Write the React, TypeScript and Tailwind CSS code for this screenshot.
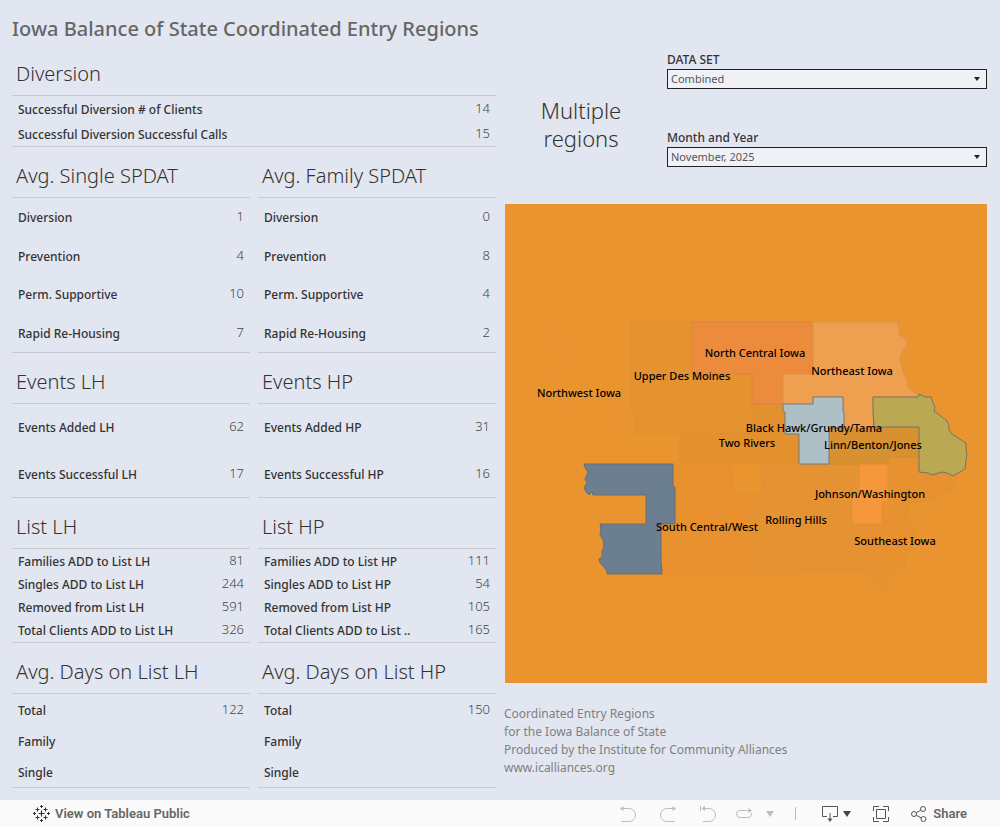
import clsx from "clsx";

type Row = { label: string; value?: number };

const diversion: Row[] = [
  { label: "Successful Diversion # of Clients", value: 14 },
  { label: "Successful Diversion Successful Calls", value: 15 },
];

const panels: { title: string; height: string; rows: Row[] }[] = [
  {
    title: "Avg. Single SPDAT",
    height: "h-[156px]",
    rows: [
      { label: "Diversion", value: 1 },
      { label: "Prevention", value: 4 },
      { label: "Perm. Supportive", value: 10 },
      { label: "Rapid Re-Housing", value: 7 },
    ],
  },
  {
    title: "Avg. Family SPDAT",
    height: "h-[156px]",
    rows: [
      { label: "Diversion", value: 0 },
      { label: "Prevention", value: 8 },
      { label: "Perm. Supportive", value: 4 },
      { label: "Rapid Re-Housing", value: 2 },
    ],
  },
  {
    title: "Events LH",
    height: "h-[95px]",
    rows: [
      { label: "Events Added LH", value: 62 },
      { label: "Events Successful LH", value: 17 },
    ],
  },
  {
    title: "Events HP",
    height: "h-[95px]",
    rows: [
      { label: "Events Added HP", value: 31 },
      { label: "Events Successful HP", value: 16 },
    ],
  },
  {
    title: "List LH",
    height: "h-[95px]",
    rows: [
      { label: "Families ADD to List LH", value: 81 },
      { label: "Singles ADD to List LH", value: 244 },
      { label: "Removed from List LH", value: 591 },
      { label: "Total Clients ADD to List LH", value: 326 },
    ],
  },
  {
    title: "List HP",
    height: "h-[95px]",
    rows: [
      { label: "Families ADD to List HP", value: 111 },
      { label: "Singles ADD to List HP", value: 54 },
      { label: "Removed from List HP", value: 105 },
      { label: "Total Clients ADD to List ..", value: 165 },
    ],
  },
  {
    title: "Avg. Days on List LH",
    height: "h-[95px]",
    rows: [{ label: "Total", value: 122 }, { label: "Family" }, { label: "Single" }],
  },
  {
    title: "Avg. Days on List HP",
    height: "h-[95px]",
    rows: [{ label: "Total", value: 150 }, { label: "Family" }, { label: "Single" }],
  },
];

// Drawn in order, outlined regions last
const regions = [
  { fill: "#ea9430", stroke: "#e7912f", points: "49,118 52,122 51,126 54,131 50,137 52,141 56,143 59,153 57,160 54,164 53,176 50,183 55,193 56,200 103,200 104,207 108,207 109,230 131,230 131,207 126,207 126,118" },
  { fill: "#e59230", stroke: "#e29030", points: "126,118 187,118 187,170 247,170 247,230 131,230 131,207 126,207" },
  { fill: "#e9942d", stroke: "#e7912e", points: "64,230 175,230 175,260 78,260 78,253 72,246 68,239" },
  { fill: "#e3912c", stroke: "#e08e2d", points: "175,230 247,230 247,200 278,200 280,230 294,230 294,260 175,260" },
  { fill: "#e8912e", stroke: "#e6902e", points: "168,261 228,261 228,290 243,290 243,370 157,370 156,320 171,320 171,283 168,283" },
  { fill: "#ea9430", stroke: "#e7912f", points: "228,260 257,260 257,291 228,290" },
  { fill: "#e59232", stroke: "#e29031", points: "257,260 354,260 354,291 347,291 347,320 362,320 362,367 243,370 243,291 258,291" },
  { fill: "#e79131", stroke: "#e48f30", points: "383,253 414,253 414,268 452,272 448,283 438,291 425,296 405,299 401,313 408,321 411,331 407,343 401,351 400,361 385,369 382,374 383,383 378,387 373,378 367,373 362,367 362,320 377,320 377,298 383,298" },
  { fill: "#d79131", stroke: "#d08c33", points: "324,224 414,223 414,253 383,253 383,260 324,260" },
  { fill: "#ec8b3c", stroke: "#da8440", points: "187,118 308,118 308,170 278,170 278,200 247,200 247,170 187,170" },
  { fill: "#ef9f50", stroke: "#dc934a", points: "308,118 393,118 392,121 394,125 394,130 400,134 403,139 398,147 395,153 398,168 402,176 403,183 408,188 414,191 413,193 368,193 369,224 339,224 338,193 308,193 308,200 278,200 278,170 308,170" },
  { fill: "#f5973a", stroke: "#df9037", points: "354,260 383,260 383,298 377,298 377,320 347,320 347,291 354,291" },
  { fill: "#aec0c5", stroke: "#727b80", points: "278,200 308,200 308,193 338,193 338,208 339,208 339,224 324,224 324,260 294,260 294,230 280,230 280,208 278,207" },
  { fill: "#bba853", stroke: "#737466", points: "368,193 413,193 414,190 420,193 426,193 428,199 430,203 429,207 437,213 442,217 444,221 444,226 447,230 453,234 461,239 461,246 462,249 461,256 460,265 453,269 448,272 442,269 437,268 427,271 423,269 414,268 414,223 369,223 368,208" },
  { fill: "#6c7f91", stroke: "#6a6f72", points: "79,260 168,260 168,283 170,283 170,320 156,320 156,357 157,370 102,370 102,367 98,362 95,359 94,355 97,353 97,346 99,343 98,336 95,331 96,325 95,320 141,320 141,291 88,291 87,288 84,291 81,288 79,283 82,279 80,275 83,268 80,264" },
];

const mapLabels = [
  { name: "North Central Iowa", x: 250, y: 153 },
  { name: "Northeast Iowa", x: 347, y: 171 },
  { name: "Upper Des Moines", x: 177, y: 176 },
  { name: "Northwest Iowa", x: 74, y: 193 },
  { name: "Black Hawk/Grundy/Tama", x: 309, y: 228 },
  { name: "Two Rivers", x: 242, y: 243 },
  { name: "Linn/Benton/Jones", x: 368, y: 245 },
  { name: "Johnson/Washington", x: 365, y: 294 },
  { name: "Rolling Hills", x: 291, y: 320 },
  { name: "South Central/West", x: 202, y: 327 },
  { name: "Southeast Iowa", x: 390, y: 341 },
];

function Panel({ title, height, rows }: { title: string; height: string; rows: Row[] }) {
  return (
    <section>
      <h2 className="h-[50px] pl-1 pt-[15px] text-[20px] leading-7 font-light text-[#333]">{title}</h2>
      <div className={clsx("border-y border-[#c9cacc]", height)}>
        <table className="h-full w-full text-[12px] leading-4">
          <tbody>
            {rows.map((row) => (
              <tr key={row.label}>
                <th scope="row" className="pt-0.5 pb-0 pl-1.5 text-left font-medium text-[#333]">
                  {row.label}
                </th>
                <td className="pt-0 pb-0.5 pr-1.5 text-right text-[13px] font-light text-[#444]">{row.value}</td>
              </tr>
            ))}
          </tbody>
        </table>
      </div>
    </section>
  );
}

function Filter({ id, label, value }: { id: string; label: string; value: string }) {
  return (
    <div>
      <label htmlFor={id} className="block h-[17px] text-[12px] leading-4 font-medium text-[#333]">
        {label}
      </label>
      <div className="relative">
        <select
          id={id}
          defaultValue={value}
          className="block h-5 w-full appearance-none border border-[#222] bg-[#f0f1f6] px-[3px] text-[11px] leading-4 text-[#555]"
        >
          <option>{value}</option>
        </select>
        <svg className="pointer-events-none absolute top-2 right-[7px]" width="6" height="4" viewBox="0 0 6 4">
          <path d="M0 0h6L3 4z" fill="#222" />
        </svg>
      </div>
    </div>
  );
}

function RegionMap() {
  return (
    <svg viewBox="0 0 482 479" className="block w-full bg-[#ea9430]" role="img" aria-label="Coordinated entry regions">
      {regions.map((region) => (
        <polygon key={region.points} points={region.points} fill={region.fill} stroke={region.stroke} strokeLinejoin="round" />
      ))}
      {mapLabels.map((label) => (
        <text key={label.name} x={label.x} y={label.y} textAnchor="middle" className="fill-black text-[11px] font-medium">
          {label.name}
        </text>
      ))}
    </svg>
  );
}

function TableauLogo() {
  return (
    <svg width="17" height="17" viewBox="0 0 17 17" fill="none" stroke="#333">
      <path strokeWidth="1.2" d="M8.5 5.5v6M5.5 8.5h6" />
      <path d="M4.5 2.5v4M2.5 4.5h4M12.5 2.5v4M10.5 4.5h4M4.5 10.5v4M2.5 12.5h4M12.5 10.5v4M10.5 12.5h4" />
      <path d="M8.5 0v3M7 1.5h3M8.5 14v3M7 15.5h3M1.5 7v3M0 8.5h3M15.5 7v3M14 8.5h3" />
    </svg>
  );
}

function Toolbar() {
  return (
    <footer className="flex h-[27px] items-center bg-[#fafafa] pr-[33px] pl-[33px] font-[Roboto,sans-serif] text-[13px] font-semibold text-[#666]">
      <a href="#" className="flex items-center gap-[5px]">
        <TableauLogo />
        View on Tableau Public
      </a>
      <div className="ml-auto flex items-center">
        <button aria-label="Undo" className="mr-6">
          <svg width="16" height="16" viewBox="0 0 16 16" fill="none" stroke="#bdbdbd">
            <path d="M1 2.5h8a6.5 6.5 0 0 1 0 13H1" />
            <path d="M0 2.5 3.5 0v5z" fill="#bdbdbd" stroke="none" />
          </svg>
        </button>
        <button aria-label="Redo" className="mr-6">
          <svg width="16" height="16" viewBox="0 0 16 16" fill="none" stroke="#bdbdbd">
            <path d="M15 2.5H7a6.5 6.5 0 0 0 0 13h8" />
            <path d="M16 2.5 12.5 0v5z" fill="#bdbdbd" stroke="none" />
          </svg>
        </button>
        <button aria-label="Revert" className="mr-5">
          <svg width="16" height="16" viewBox="0 0 16 16" fill="none" stroke="#bdbdbd">
            <path d="M.5 0v5M3 2.5h6a6.5 6.5 0 0 1 0 13H3" />
            <path d="M1.5 2.5 5 0v5z" fill="#bdbdbd" stroke="none" />
          </svg>
        </button>
        <button aria-label="Refresh" className="mr-[14px]">
          <svg width="16" height="16" viewBox="0 0 16 16" fill="none" stroke="#bdbdbd">
            <path d="M14 4.5H4a3.5 3.5 0 0 0 0 7h8a3.5 3.5 0 0 0 3.5-3.5V7" />
            <path d="M16 4.5 12.5 2v5z" fill="#bdbdbd" stroke="none" />
          </svg>
        </button>
        <button aria-label="Refresh options" className="mr-[21px]">
          <svg width="8" height="6" viewBox="0 0 8 6">
            <path d="M0 0h8L4 6z" fill="#bdbdbd" />
          </svg>
        </button>
        <span className="mr-[26px] h-[13px] w-px bg-[#bdbdbd]" />
        <button aria-label="Download" className="mr-[22px] flex items-center gap-[5px]">
          <svg width="16" height="16" viewBox="0 0 16 16" fill="none" stroke="#555">
            <path d="M5 10.5H.5V.5h15v10H11M8 7v7" />
            <path d="M5.5 12.5h5L8 16z" fill="#555" stroke="none" />
          </svg>
          <svg width="8" height="6" viewBox="0 0 8 6">
            <path d="M0 0h8L4 6z" fill="#444" />
          </svg>
        </button>
        <button aria-label="Full screen" className="mr-[22px]">
          <svg width="16" height="16" viewBox="0 0 16 16" fill="none" stroke="#555">
            <path d="M3.5 3.5h9v9h-9zM6 .5H.5V5M10 .5h5.5V5M6 15.5H.5V11M10 15.5h5.5V11" />
          </svg>
        </button>
        <button className="flex items-center gap-1.5">
          <svg width="16" height="16" viewBox="0 0 16 16" fill="none" stroke="#555">
            <circle cx="3" cy="8" r="2.5" />
            <circle cx="12" cy="3" r="2.5" />
            <circle cx="12.5" cy="13" r="2.5" />
            <path d="M5.2 6.8 9.8 4.2M5.2 9.2l5 2.700" />
          </svg>
          Share
        </button>
      </div>
    </footer>
  );
}

export default function App() {
  return (
    <div className="bg-[#e2e6f0] font-['Noto_Sans',sans-serif]">
      <main className="grid grid-cols-2 gap-x-2 px-3 pb-3">
        <div>
          <h1 className="h-[45px] pt-[15px] text-[20px] leading-7 font-medium whitespace-nowrap text-[#666]">
            Iowa Balance of State Coordinated Entry Regions
          </h1>
          <Panel title="Diversion" height="h-[52px]" rows={diversion} />
          <div className="grid grid-cols-2 gap-x-2">
            {panels.map((panel) => (
              <Panel key={panel.title} {...panel} />
            ))}
          </div>
        </div>
        <div className="pt-[52px]">
          <div className="flex h-[152px] gap-[9px] pr-px">
            <p className="flex-1 pt-11 text-center text-[22px] leading-7 font-light text-[#333]">
              Multiple
              <br />
              regions
            </p>
            <div className="flex w-[320px] flex-col gap-[41px]">
              <Filter id="data-set" label="DATA SET" value="Combined" />
              <Filter id="month" label="Month and Year" value="November, 2025" />
            </div>
          </div>
          <div className="px-px">
            <RegionMap />
          </div>
          <p className="pt-[22px] text-[12px] leading-[18px] text-[#808080]">
            Coordinated Entry Regions
            <br />
            for the Iowa Balance of State
            <br />
            Produced by the Institute for Community Alliances
            <br />
            www.icalliances.org
          </p>
        </div>
      </main>
      <Toolbar />
    </div>
  );
}
